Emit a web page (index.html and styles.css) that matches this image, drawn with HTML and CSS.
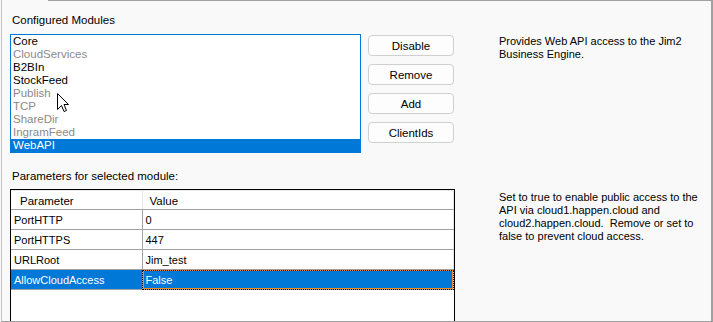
FILE: index.html
```html
<!DOCTYPE html>
<html lang="en">
<head>
    <meta charset="UTF-8">
    <title>Jim2 Server Modules</title>
    <link rel="stylesheet" href="styles.css">
</head>
<body>
    <div class="window">
        <div class="tab-edge"></div>

        <!-- Module list -->
        <section class="modules">
            <div class="modules-main">
                <div class="group-label">Configured Modules</div>
                <ul class="module-list">
                    <li>Core</li>
                    <li class="disabled">CloudServices</li>
                    <li>B2BIn</li>
                    <li>StockFeed</li>
                    <li class="disabled">Publish</li>
                    <li class="disabled">TCP</li>
                    <li class="disabled">ShareDir</li>
                    <li class="disabled">IngramFeed</li>
                    <li class="selected">WebAPI</li>
                </ul>
            </div>
            <div class="module-buttons">
                <button>Disable</button>
                <button>Remove</button>
                <button>Add</button>
                <button>ClientIds</button>
            </div>
            <p class="help help-module">Provides Web API access to the Jim2 Business Engine.</p>
        </section>

        <!-- Parameters -->
        <section class="params">
            <div class="params-main">
                <div class="group-label">Parameters for selected module:</div>
                <div class="grid-wrap">
                    <table class="param-grid">
                        <thead>
                            <tr>
                                <th class="col-name">Parameter</th>
                                <th>Value</th>
                            </tr>
                        </thead>
                        <tbody>
                            <tr><td class="col-name">PortHTTP</td><td>0</td></tr>
                            <tr><td class="col-name">PortHTTPS</td><td>447</td></tr>
                            <tr><td class="col-name">URLRoot</td><td>Jim_test</td></tr>
                            <tr class="selected"><td class="col-name">AllowCloudAccess</td><td class="focus">False</td></tr>
                        </tbody>
                    </table>
                </div>
            </div>
            <p class="help help-param">Set to true to enable public access to the API via cloud1.happen.cloud and cloud2.happen.cloud.&nbsp; Remove or set to false to prevent cloud access.</p>
        </section>

        <svg class="cursor" width="13" height="20" viewBox="0 0 13 20">
            <path d="M0.5 0.5 L0.5 16.5 L4.5 12.5 L7 18.5 L9.5 17.5 L7 11.5 L11.5 11.5 Z" fill="#fff" stroke="#000" stroke-width="1"/>
        </svg>
    </div>
</body>
</html>
```

FILE: styles.css
```css
/* Reset */
* {
    margin: 0;
    padding: 0;
    box-sizing: border-box;
}

body {
    font-family: 'Liberation Sans', Arial, sans-serif;
    font-size: 11px;
    color: #000;
    background-color: #f9f9f9;
}

/* Outer tab page */
.window {
    position: relative;
    width: 712px;
    height: 322px;
    margin-left: 1px;
    border-left: 1px solid #c4c4c4;
    border-right: 2px solid #a0a0a0;
    border-bottom: 1px solid #a0a0a0;
    overflow: hidden;
}

.tab-edge {
    height: 1px;
    margin-left: 46px;
    background-color: #a0a0a0;
}

.group-label {
    font-size: 11.5px;
    line-height: 16px;
    padding-left: 2px;
}

/* Top section */
.modules {
    display: flex;
    align-items: flex-start;
    padding-left: 8px;
}

.modules-main {
    width: 351px;
}

.modules .group-label {
    margin-top: 11px;
    margin-bottom: 6px;
}

.module-list {
    list-style: none;
    background-color: #fff;
    border: 1px solid #0078d7;
    font-size: 11.5px;
}

.module-list li {
    height: 13px;
    line-height: 13px;
    padding-left: 2px;
    white-space: nowrap;
}

.module-list li.disabled {
    color: #8a8a8a;
}

.module-list li.selected {
    background-color: #0078d7;
    color: #fff;
}

.module-buttons {
    display: flex;
    flex-direction: column;
    gap: 8px;
    width: 86px;
    margin-left: 7px;
    margin-top: 34px;
}

.module-buttons button {
    height: 21px;
    font-family: inherit;
    font-size: 11.5px;
    color: #000;
    background-color: #fdfdfd;
    border: 1px solid #d0d0d0;
    border-radius: 4px;
}

.help {
    line-height: 13px;
    font-size: 11px;
}

.help-module {
    width: 190px;
    margin-left: 45px;
    margin-top: 34px;
}

/* Parameter section */
.params {
    display: flex;
    align-items: flex-start;
    padding-left: 8px;
    margin-top: 15px;
}

.params-main {
    width: 445px;
}

.params .group-label {
    margin-bottom: 5px;
}

.grid-wrap {
    height: 140px;
    background-color: #fff;
    border: 1px solid #000;
    border-bottom: none;
}

.param-grid {
    width: 100%;
    border-collapse: collapse;
    border-top: 1px solid #e6e6e6;
    border-right: 1px solid #e6e6e6;
}

.param-grid th,
.param-grid td {
    height: 20px;
    text-align: left;
    font-weight: normal;
    white-space: nowrap;
    border-bottom: 1px solid #a0a0a0;
}

.param-grid th {
    height: 19px;
    font-size: 11.5px;
    padding-left: 7px;
    padding-top: 2px;
}

.param-grid th.col-name {
    padding-left: 9px;
    border-right: 1px solid #e6e6e6;
}

.param-grid td {
    padding-left: 3px;
}

.param-grid .col-name {
    width: 131px;
}

.param-grid td.col-name {
    border-right: 1px solid #a0a0a0;
}

.param-grid tr.selected td {
    background-color: #0078d7;
    color: #fff;
}

.param-grid td.focus {
    outline: 1px dotted #000;
    outline-offset: -1px;
    box-shadow: inset 0 0 0 1px #f08a24;
}

.help-param {
    width: 200px;
    margin-left: 44px;
    margin-top: 23px;
}

/* Mouse pointer over the list */
.cursor {
    position: absolute;
    left: 55px;
    top: 93px;
}
```
